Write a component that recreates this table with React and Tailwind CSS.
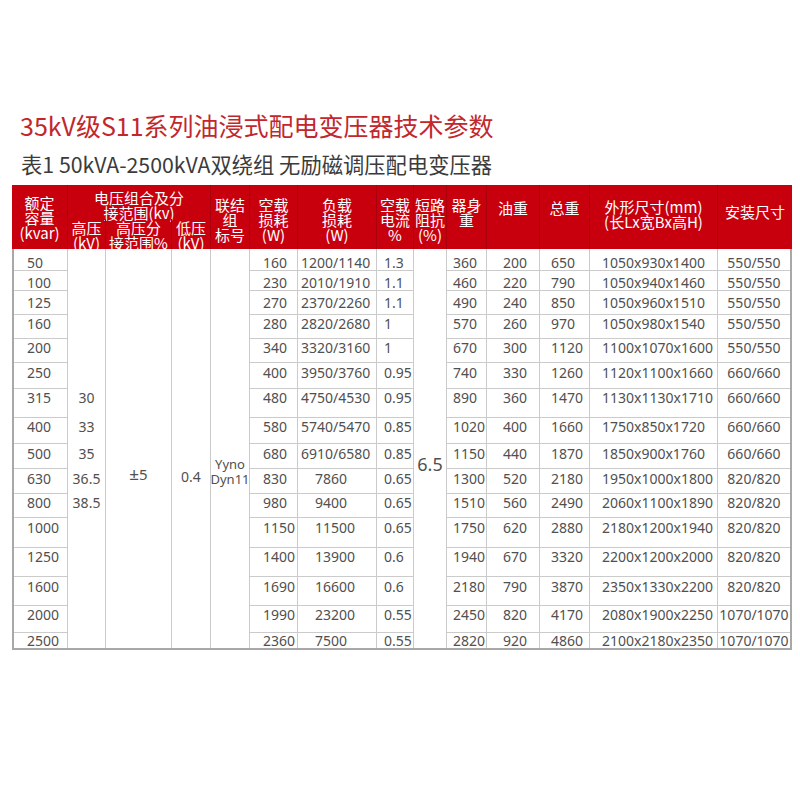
import React from 'react';

const ROWS = [
  ['50', '', '160', '1200/1140', '1.3', '360', '200', '650', '1050x930x1400', '550/550'],
  ['100', '', '230', '2010/1910', '1.1', '460', '220', '790', '1050x940x1460', '550/550'],
  ['125', '', '270', '2370/2260', '1.1', '490', '240', '850', '1050x960x1510', '550/550'],
  ['160', '', '280', '2820/2680', '1', '570', '260', '970', '1050x980x1540', '550/550'],
  ['200', '', '340', '3320/3160', '1', '670', '300', '1120', '1100x1070x1600', '550/550'],
  ['250', '', '400', '3950/3760', '0.95', '740', '330', '1260', '1120x1100x1660', '660/660'],
  ['315', '30', '480', '4750/4530', '0.95', '890', '360', '1470', '1130x1130x1710', '660/660'],
  ['400', '33', '580', '5740/5470', '0.85', '1020', '400', '1660', '1750x850x1720', '660/660'],
  ['500', '35', '680', '6910/6580', '0.85', '1150', '440', '1870', '1850x900x1760', '660/660'],
  ['630', '36.5', '830', '7860', '0.65', '1300', '520', '2180', '1950x1000x1800', '820/820'],
  ['800', '38.5', '980', '9400', '0.65', '1510', '560', '2490', '2060x1100x1890', '820/820'],
  ['1000', '', '1150', '11500', '0.65', '1750', '620', '2880', '2180x1200x1940', '820/820'],
  ['1250', '', '1400', '13900', '0.6', '1940', '670', '3320', '2200x1200x2000', '820/820'],
  ['1600', '', '1690', '16600', '0.6', '2180', '790', '3870', '2350x1330x2200', '820/820'],
  ['2000', '', '1990', '23200', '0.55', '2450', '820', '4170', '2080x1900x2250', '1070/1070'],
  ['2500', '', '2360', '7500', '0.55', '2820', '920', '4860', '2100x2180x2350', '1070/1070'],
];

const PT = [
  'pt-[6px]', 'pt-[4px]', 'pt-[4px]', 'pt-[1px]', 'pt-[1px]', 'pt-[2px]', 'pt-[1px]', 'pt-[1px]',
  'pt-[2px]', 'pt-[2px]', 'pt-[1px]', 'pt-[2px]', 'pt-[1px]', 'pt-[2px]', 'pt-[1px]', 'pt-[0px]',
];

const RS = [
  'row-start-1', 'row-start-2', 'row-start-3', 'row-start-4', 'row-start-5', 'row-start-6',
  'row-start-7', 'row-start-8', 'row-start-9', 'row-start-10', 'row-start-11', 'row-start-12',
  'row-start-13', 'row-start-14', 'row-start-15', 'row-start-16',
];

const CS = ['col-start-1', 'col-start-2', 'col-start-6', 'col-start-7', 'col-start-8', 'col-start-10', 'col-start-11', 'col-start-12', 'col-start-13', 'col-start-14'];

const ALIGN = [
  'pl-[13px]',
  'text-center',
  'pl-[13px]',
  '',
  'pl-[7px]',
  'pl-[6px]',
  'pl-[16px]',
  'pl-[11px]',
  'pl-[12px]',
  'text-center',
];

const LINE = 'border-[#cbcbcb]';

function HeadCell({ className, lines }) {
  return (
    <div className={`flex flex-col items-center text-center border-r border-[#a9000b] ${className}`}>
      {lines.map((l, i) => (
        <span key={i} className="whitespace-nowrap">{l}</span>
      ))}
    </div>
  );
}

export default function App() {
  return (
    <div className="w-[800px] h-[800px] bg-white overflow-hidden pt-[110px] font-['Noto_Sans_CJK_SC',sans-serif]">
      <div className="pl-[20px] text-[25px] leading-[30px] text-[#c1272d] whitespace-nowrap">
        35kV级S11系列油浸式配电变压器技术参数
      </div>
      <div className="pl-[21px] mt-[11px] text-[21.3px] leading-[26px] text-[#3b3b3b] whitespace-nowrap">
        表1 50kVA-2500kVA双绕组 无励磁调压配电变压器
      </div>

      <div className="ml-[12px] mt-[8px] w-[780px]">
        {/* header */}
        <div className="grid grid-cols-[56px_38px_66px_39px_39px_48px_79px_37px_33px_40px_53px_50px_128px_74px] grid-rows-[34px_30px] bg-[#c8000e] text-white text-[15px] leading-[15px]">
          <HeadCell className="col-start-1 row-start-1 row-span-2 pt-[10px]" lines={['额定', '容量', '(kvar)']} />
          <HeadCell className="col-start-2 col-span-3 row-start-1 pt-[5px]" lines={['电压组合及分', '接范围(kv)']} />
          <HeadCell className="col-start-2 row-start-2 pt-[1px]" lines={['高压', '(kV)']} />
          <HeadCell className="col-start-3 row-start-2 pt-[1px]" lines={['高压分', '接范围%']} />
          <HeadCell className="col-start-4 row-start-2 pt-[1px]" lines={['低压', '(kV)']} />
          <HeadCell className="col-start-5 row-start-1 row-span-2 pt-[12px]" lines={['联结', '组', '标号']} />
          <HeadCell className="col-start-6 row-start-1 row-span-2 pt-[12px]" lines={['空载', '损耗', '(W)']} />
          <HeadCell className="col-start-7 row-start-1 row-span-2 pt-[12px]" lines={['负载', '损耗', '(W)']} />
          <HeadCell className="col-start-8 row-start-1 row-span-2 pt-[12px]" lines={['空载', '电流', '%']} />
          <HeadCell className="col-start-9 row-start-1 row-span-2 pt-[12px]" lines={['短路', '阻抗', '(%)']} />
          <HeadCell className="col-start-10 row-start-1 row-span-2 pt-[12px]" lines={['器身', '重']} />
          <HeadCell className="col-start-11 row-start-1 row-span-2 pt-[15px]" lines={['油重']} />
          <HeadCell className="col-start-12 row-start-1 row-span-2 pt-[15px]" lines={['总重']} />
          <HeadCell className="col-start-13 row-start-1 row-span-2 pt-[14px]" lines={['外形尺寸(mm)', '(长Lx宽Bx高H)']} />
          <div className="col-start-14 row-start-1 row-span-2 pt-[19px] text-center whitespace-nowrap">安装尺寸</div>
        </div>

        {/* body */}
        <div className="grid grid-cols-[54px_38px_66px_39px_39px_48px_79px_37px_33px_40px_53px_50px_128px_72px] grid-rows-[22px_20px_24px_24px_24px_26px_29px_26px_25px_25px_24px_30px_29px_29px_27px_15px] border-l-2 border-r-2 border-b-2 border-[#a8a8a8] text-[14px] leading-[16px] text-[#505050] font-['Noto_Sans','Noto_Sans_CJK_SC',sans-serif]">
          {ROWS.map((row, r) =>
            row.map((val, c) => {
              const last = r === ROWS.length - 1;
              const bottom = c === 1 || last ? '' : 'border-b';
              const right = c === 9 ? '' : 'border-r';
              let align = ALIGN[c];
              if (c === 3) align = val.includes('/') ? 'pl-[3px]' : 'pl-[17px]';
              return (
                <div
                  key={`${r}-${c}`}
                  className={`${CS[c]} ${RS[r]} ${PT[r]} ${align} ${bottom} ${right} ${LINE} whitespace-nowrap`}
                >
                  {val}
                </div>
              );
            })
          )}
          <div className={`col-start-3 row-start-1 row-span-16 border-r ${LINE} text-center pt-[217px] text-[15px] leading-[16px]`}>
            <span className="text-[17px]">±</span>5
          </div>
          <div className={`col-start-4 row-start-1 row-span-16 border-r ${LINE} text-center pt-[220px]`}>0.4</div>
          <div className={`col-start-5 row-start-1 row-span-16 border-r ${LINE} flex flex-col items-center pt-[208px] text-[13px] leading-[15px] whitespace-nowrap`}>
            <span>Yyno</span>
            <span>Dyn11</span>
          </div>
          <div className={`col-start-9 row-start-1 row-span-16 border-r ${LINE} text-center pt-[205px] text-[18px] leading-[20px]`}>6.5</div>
        </div>
      </div>
    </div>
  );
}
